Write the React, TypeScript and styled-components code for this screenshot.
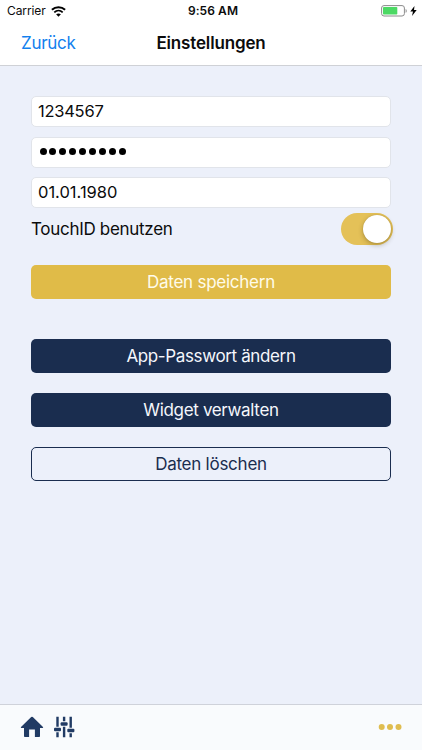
import React, { useState } from 'react';
import styled, { createGlobalStyle } from 'styled-components';

const navy = '#1a2d4f';
const gold = '#e0bb48';

const GlobalStyle = createGlobalStyle`
  *, *::before, *::after { box-sizing: border-box; }
  html, body { margin: 0; padding: 0; }
  body { font-family: Inter, "Liberation Sans", sans-serif; color: #0b0b0c; overflow: hidden; }
  button, input { font-family: inherit; }
`;

const Screen = styled.div`
  display: flex;
  flex-direction: column;
  width: 100%;
  height: 100vh;
  background: #ecf0fa;
`;

const Header = styled.header`
  flex: none;
  height: 66px;
  background: #fff;
  border-bottom: 1px solid #cfd1d6;
`;

const StatusBar = styled.div`
  display: grid;
  grid-template-columns: 1fr auto 1fr;
  align-items: center;
  height: 22px;
  padding: 0 5px 0 7px;
  line-height: 22px;
`;

const Carrier = styled.div`
  display: flex;
  align-items: center;
  gap: 5px;
  font-size: 12px;
  letter-spacing: -0.1px;
`;

const Clock = styled.div`
  font-size: 12px;
  font-weight: 600;
  letter-spacing: 0.1px;
  padding-left: 2px;
`;

const Power = styled.div`
  display: flex;
  justify-content: flex-end;
  align-items: center;
  gap: 3px;
`;

const NavBar = styled.nav`
  display: grid;
  grid-template-columns: 1fr auto 1fr;
  align-items: center;
  height: 42px;
  padding: 0 21px;
`;

const BackButton = styled.button`
  justify-self: start;
  padding: 0;
  border: 0;
  background: none;
  color: #1180ee;
  font-size: 17px;
  letter-spacing: -0.3px;
`;

const Title = styled.h1`
  margin: 0;
  font-size: 17px;
  font-weight: 600;
  letter-spacing: -0.15px;
`;

const Content = styled.main`
  flex: 1;
  display: flex;
  flex-direction: column;
  padding: 30px 31px 0;
`;

const Fields = styled.div`
  display: flex;
  flex-direction: column;
  gap: 9.5px;
`;

const Field = styled.div<{ $tracking?: number }>`
  display: flex;
  align-items: center;
  height: 31px;
  padding: 0 6px 1px;
  background: #fff;
  border: 1px solid #e1e4ea;
  border-radius: 5px;
  font-size: 16.5px;
  letter-spacing: ${p => p.$tracking ?? -0.25}px;
`;

const Dots = styled.div`
  display: flex;
  gap: 2.9px;
  padding-left: 1.6px;
`;

const Dot = styled.span`
  width: 7px;
  height: 7px;
  border-radius: 50%;
  background: #000;
`;

const SwitchRow = styled.div`
  display: flex;
  align-items: center;
  justify-content: space-between;
  height: 32px;
  margin: 5px -2px 0 0;
  font-size: 17px;
  letter-spacing: -0.3px;
`;

const Track = styled.button<{ $on: boolean }>`
  display: flex;
  align-items: center;
  justify-content: ${p => (p.$on ? 'flex-end' : 'flex-start')};
  width: 52px;
  height: 32px;
  padding: 0 2px;
  border: 0;
  border-radius: 16px;
  background: ${p => (p.$on ? '#e4c158' : '#d7d9df')};
`;

const Thumb = styled.span`
  width: 28px;
  height: 28px;
  border-radius: 50%;
  background: #fff;
  box-shadow: 0 2px 5px rgba(60, 45, 0, 0.32), 0 0 1px rgba(90, 65, 0, 0.35);
`;

const Actions = styled.div`
  display: flex;
  flex-direction: column;
  gap: 20.4px;
  margin-top: 40.4px;
`;

const ActionButton = styled.button<{ $kind: 'save' | 'primary' | 'outline'; $tracking?: number }>`
  flex: none;
  width: 100%;
  height: 33.6px;
  padding: 0;
  border: ${p => (p.$kind === 'outline' ? `1px solid ${navy}` : '0')};
  border-radius: 5px;
  background: ${p => (p.$kind === 'save' ? gold : p.$kind === 'primary' ? navy : 'transparent')};
  color: ${p => (p.$kind === 'outline' ? navy : p.$kind === 'save' ? '#fffbea' : '#f5f7fc')};
  font-size: 17px;
  letter-spacing: ${p => p.$tracking ?? -0.25}px;
`;

const SaveArea = styled.div`
  display: flex;
  margin-top: 20px;
`;

const TabBar = styled.footer`
  flex: none;
  display: flex;
  align-items: center;
  gap: 10px;
  height: 46px;
  padding: 0 20px 1px;
  border-top: 1px solid #cfd2da;
  background: #f9fbfd;
`;

const TabButton = styled.button`
  display: flex;
  padding: 0;
  border: 0;
  background: none;
`;

const MoreButton = styled(TabButton)`
  margin-left: auto;
`;

const WifiIcon = () => (
  <svg width="15" height="11" viewBox="0 0 15 11" fill="none" stroke="#000">
    <path d="M.9 3.8C4.6.3 10.4.3 14.1 3.8" strokeWidth="2" />
    <path d="M3.3 6.3C5.7 4.1 9.3 4.1 11.7 6.3" strokeWidth="1.8" />
    <path d="M5.1 8.3C6.5 7.1 8.5 7.1 9.9 8.3L7.5 10.7Z" fill="#000" stroke="none" />
  </svg>
);

const BatteryIcon = () => (
  <svg width="26" height="12" viewBox="0 0 26 12">
    <rect x=".6" y=".6" width="22.8" height="10.4" rx="2.4" fill="#fff" stroke="#8b8b8b" />
    <rect x="2" y="2" width="14.3" height="7.6" rx=".8" fill="#4cd964" />
    <path d="M24.6 4.1c1.5.4 1.5 3.2 0 3.6Z" fill="#8b8b8b" />
  </svg>
);

const BoltIcon = () => (
  <svg width="7" height="10" viewBox="0 0 7 10">
    <path d="M4.5 0 .3 5.6H3L2 10 6.7 4.1H4Z" fill="#000" />
  </svg>
);

const HomeIcon = () => (
  <svg width="24" height="22" viewBox="0 0 24 22">
    <path d="M11.2 1.1Q12 .4 12.8 1.1L23 11.1c.3.4.2.9-.3.9H20v8.2c0 .5-.3.8-.8.8H14.9v-7.5H9.1V21H4.8c-.5 0-.8-.3-.8-.8V12H1.3c-.5 0-.6-.5-.3-.9Z" fill="#213b64" />
  </svg>
);

const SlidersIcon = () => (
  <svg width="21" height="22" viewBox="0 0 21 22" fill="#213b64">
    <path d="M2.3 .8h2.4v10H2.3ZM2.3 16.2h2.4v5H2.3ZM8.9 .8h2.4v4.4H8.9ZM8.9 10.7h2.4v10.5H8.9ZM15.5 .8h2.4v11h-2.4ZM15.5 17.3h2.4v3.9h-2.4Z" />
    <rect x="0" y="11.8" width="7" height="3.4" rx="1" />
    <rect x="6.6" y="6.2" width="7" height="3.5" rx="1" />
    <rect x="13.3" y="12.8" width="7.1" height="3.5" rx="1" />
  </svg>
);

const MoreIcon = () => (
  <svg width="24" height="8" viewBox="0 0 24 8" fill="#dfbd50">
    <circle cx="3.7" cy="4" r="3" />
    <circle cx="12" cy="4" r="3" />
    <circle cx="20.5" cy="4" r="3" />
  </svg>
);

export default function App() {
  const [touchId, setTouchId] = useState(true);
  return (
    <Screen>
      <GlobalStyle />
      <Header>
        <StatusBar>
          <Carrier>Carrier <WifiIcon /></Carrier>
          <Clock>9:56 AM</Clock>
          <Power><BatteryIcon /><BoltIcon /></Power>
        </StatusBar>
        <NavBar>
          <BackButton>Zurück</BackButton>
          <Title>Einstellungen</Title>
        </NavBar>
      </Header>
      <Content>
        <Fields>
          <Field>1234567</Field>
          <Field>
            <Dots>{Array.from({ length: 9 }, (_, i) => <Dot key={i} />)}</Dots>
          </Field>
          <Field $tracking={0}>01.01.1980</Field>
        </Fields>
        <SwitchRow>
          <span>TouchID benutzen</span>
          <Track $on={touchId} role="switch" aria-checked={touchId} aria-label="TouchID benutzen" onClick={() => setTouchId(!touchId)}>
            <Thumb />
          </Track>
        </SwitchRow>
        <SaveArea>
          <ActionButton $kind="save">Daten speichern</ActionButton>
        </SaveArea>
        <Actions>
          <ActionButton $kind="primary" $tracking={-0.37}>App-Passwort ändern</ActionButton>
          <ActionButton $kind="primary" $tracking={-0.34}>Widget verwalten</ActionButton>
          <ActionButton $kind="outline">Daten löschen</ActionButton>
        </Actions>
      </Content>
      <TabBar>
        <TabButton aria-label="Start"><HomeIcon /></TabButton>
        <TabButton aria-label="Filter"><SlidersIcon /></TabButton>
        <MoreButton aria-label="Mehr"><MoreIcon /></MoreButton>
      </TabBar>
    </Screen>
  );
}
